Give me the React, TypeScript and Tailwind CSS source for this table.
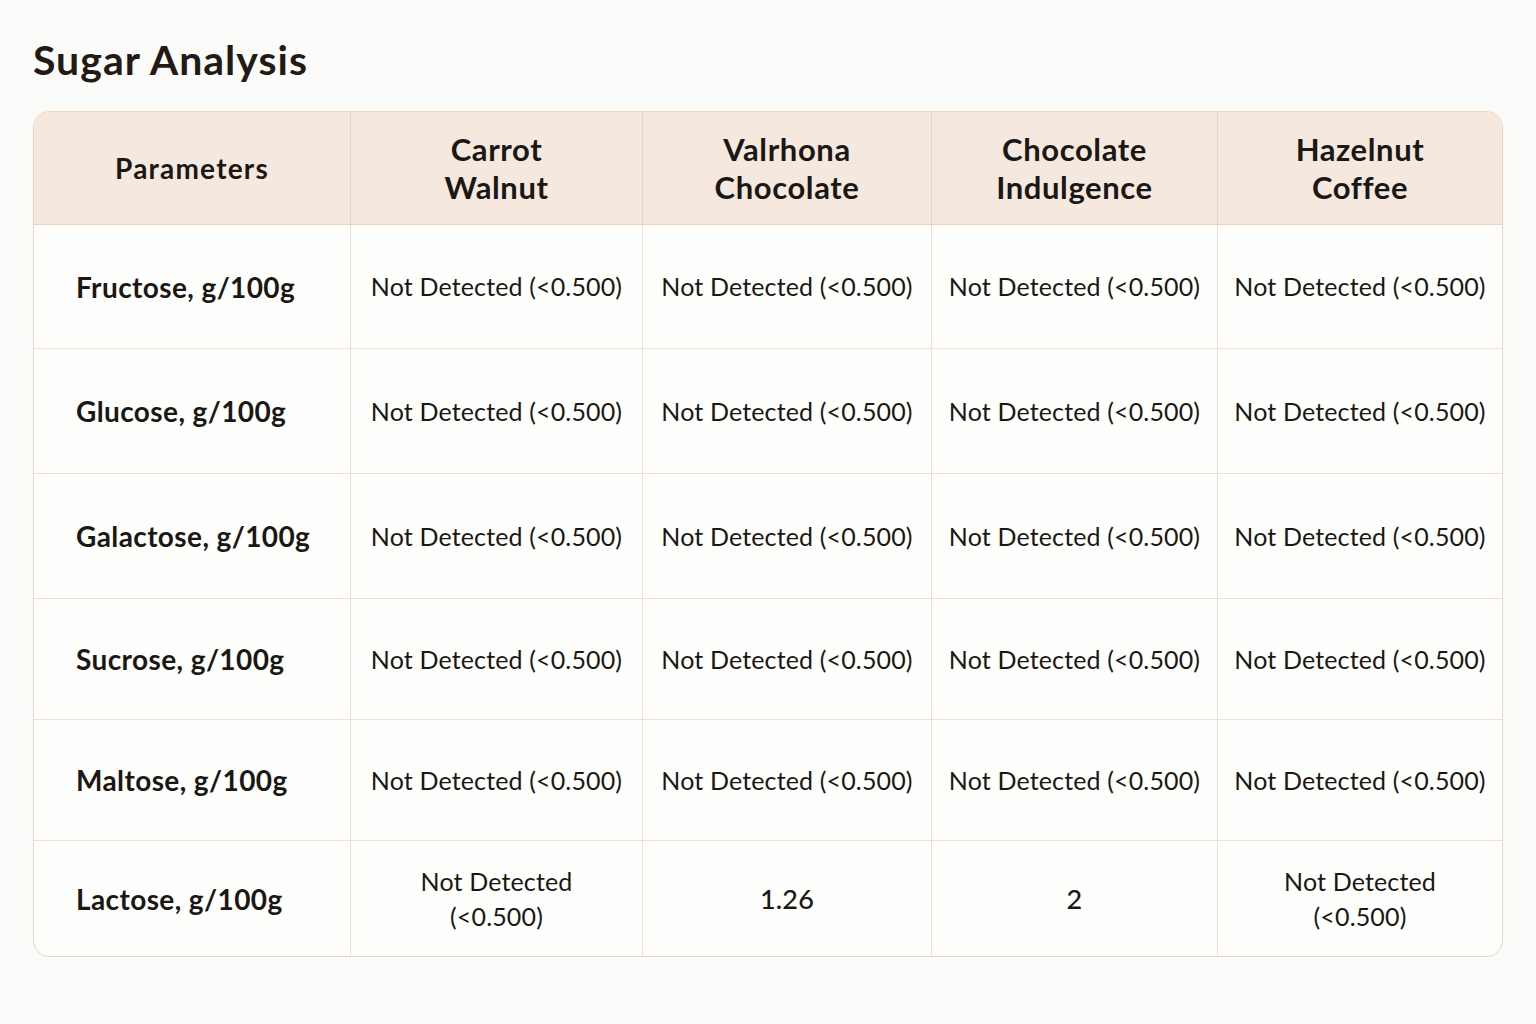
const columns = ["Carrot\nWalnut", "Valrhona\nChocolate", "Chocolate\nIndulgence", "Hazelnut\nCoffee"];

const ND = "Not Detected (<0.500)";

const rows: { label: string; values: string[]; h: string }[] = [
  { label: "Fructose, g/100g", values: [ND, ND, ND, ND], h: "h-[124px]" },
  { label: "Glucose, g/100g", values: [ND, ND, ND, ND], h: "h-[125px]" },
  { label: "Galactose, g/100g", values: [ND, ND, ND, ND], h: "h-[125px]" },
  { label: "Sucrose, g/100g", values: [ND, ND, ND, ND], h: "h-[121px]" },
  { label: "Maltose, g/100g", values: [ND, ND, ND, ND], h: "h-[121px]" },
  { label: "Lactose, g/100g", values: ["Not Detected\n(<0.500)", "1.26", "2", "Not Detected\n(<0.500)"], h: "h-[115px]" },
];

function Lines({ text }: { text: string }) {
  const parts = text.split("\n");
  return (
    <>
      {parts.map((p, i) => (
        <span key={i} className="block">
          {p}
        </span>
      ))}
    </>
  );
}

export default function App() {
  return (
    <div
      className="min-h-[1024px] w-full bg-[#fbfbfa] px-[33px] pt-[36px] text-[#1b1714]"
      style={{ fontFamily: "Lato, 'Noto Sans', sans-serif" }}
    >
      <h1 className="text-[41px] font-bold leading-[48px] tracking-[1px] text-[#231a15]">
        Sugar Analysis
      </h1>

      <div className="mt-[27px] w-[1470px] overflow-hidden rounded-[16px] border border-[#efd5c0] bg-[#fefefd]">
        <div className="grid grid-cols-[316px_292px_289px_286px_285px]">
          {/* header */}
          <div className="flex h-[113px] items-center justify-center border-b border-[#efd2bb] bg-[#f5e9df] text-[28px] font-bold leading-[38px] tracking-[1.2px]">
            Parameters
          </div>
          {columns.map((c) => (
            <div
              key={c}
              className="flex h-[113px] items-center justify-center border-b border-l border-[#efd2bb] bg-[#f5e9df] text-center text-[31px] font-bold leading-[38px] tracking-[0.6px]"
            >
              <div>
                <Lines text={c} />
              </div>
            </div>
          ))}

          {/* body */}
          {rows.map((r, ri) => (
            <Row key={r.label} row={r} last={ri === rows.length - 1} />
          ))}
        </div>
      </div>
    </div>
  );
}

function Row({
  row,
  last,
}: {
  row: { label: string; values: string[]; h: string };
  last: boolean;
}) {
  const bottom = last ? "" : "border-b border-[#f3dfd0]";
  return (
    <>
      <div
        className={`flex ${row.h} items-center pl-[42px] ${bottom} text-[28px] font-bold tracking-[0.4px]`}
      >
        {row.label}
      </div>
      {row.values.map((v, i) => (
        <div
          key={i}
          className={`flex ${row.h} items-center justify-center border-l border-[#f3dfd0] ${bottom} whitespace-nowrap text-center text-[25px] leading-[35px] tracking-[0.15px] ${
            v.length < 6 ? "text-[27px] font-medium" : ""
          }`}
        >
          <div>
            <Lines text={v} />
          </div>
        </div>
      ))}
    </>
  );
}
